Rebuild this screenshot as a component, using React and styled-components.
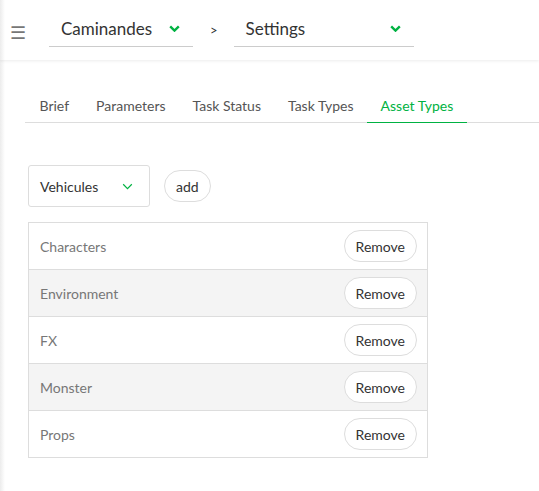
import React from "react";
import styled, { createGlobalStyle } from "styled-components";

const GlobalStyle = createGlobalStyle`
  body {
    margin: 0;
    font-family: Lato, "Open Sans", sans-serif;
    background: #fff;
    color: #333;
  }
`;

const Chevron = ({ size = 11, thin }) => (
  <svg width={size} height={Math.round(size * 0.65)} viewBox="0 0 10 6.5">
    <polyline
      points="1,1.2 5,5.2 9,1.2"
      fill="none"
      stroke="#00b242"
      strokeWidth={thin ? 1.1 : 2.2}
    />
  </svg>
);

const App = () => {
  const types = ["Characters", "Environment", "FX", "Monster", "Props"];
  const tabs = ["Brief", "Parameters", "Task Status", "Task Types", "Asset Types"];
  return (
    <Page>
      <GlobalStyle />
      <Header>
        <Burger>☰</Burger>
        <Combo width="144px">
          <span>Caminandes</span>
          <Chevron />
        </Combo>
        <Sep>&gt;</Sep>
        <Combo width="180px">
          <span>Settings</span>
          <Chevron />
        </Combo>
      </Header>
      <Main>
        <Tabs>
          {tabs.map((t) => (
            <Tab key={t} active={t === "Asset Types"}>
              {t}
            </Tab>
          ))}
        </Tabs>
        <AddRow>
          <Select>
            <span>Vehicules</span>
            <Chevron size={11} thin />
          </Select>
          <Pill>add</Pill>
        </AddRow>
        <Table>
          {types.map((t, i) => (
            <Row key={t} striped={i % 2 === 1}>
              <Name>{t}</Name>
              <Pill>Remove</Pill>
            </Row>
          ))}
        </Table>
      </Main>
    </Page>
  );
};

const Page = styled.div`
  min-height: 491px;
  position: relative;
  &::before {
    content: "";
    position: absolute;
    left: 0;
    top: 0;
    bottom: 0;
    width: 5px;
    background: linear-gradient(to right, #ececec, #fff);
  }
`;

const Header = styled.header`
  height: 60px;
  display: flex;
  align-items: flex-start;
  padding-left: 10px;
  box-shadow: 0 1px 3px rgba(0, 0, 0, 0.08);
  position: relative;
`;

const Burger = styled.span`
  font-size: 18px;
  color: #777;
  width: 39px;
  margin-top: 21px;
`;

const Combo = styled.div`
  width: ${(p) => p.width};
  height: 40px;
  margin-top: 7px;
  box-sizing: border-box;
  border-bottom: 1px solid #ccc;
  display: flex;
  align-items: center;
  justify-content: space-between;
  padding: 3px 13px 0 12px;
  font-size: 17px;
  color: #333;
`;

const Sep = styled.span`
  font-size: 13px;
  margin: 22px 16px 0 17px;
  color: #333;
`;

const Main = styled.main`
  padding: 28px 0 0 25px;
`;

const Tabs = styled.div`
  display: flex;
  border-bottom: 1px solid #ddd;
  padding-left: 1px;
`;

const Tab = styled.div`
  font-size: 14px;
  padding: 9px 13.5px 8px;
  color: ${(p) => (p.active ? "#00b242" : "#555")};
  border-bottom: 1px solid ${(p) => (p.active ? "#00b242" : "transparent")};
  margin-bottom: -1px;
`;

const AddRow = styled.div`
  display: flex;
  align-items: center;
  gap: 14px;
  margin: 42px 0 15px 3px;
`;

const Select = styled.div`
  width: 122px;
  height: 42px;
  box-sizing: border-box;
  border: 1px solid #ddd;
  border-radius: 3px;
  display: flex;
  align-items: center;
  justify-content: space-between;
  padding: 0 16px 0 11px;
  font-size: 14px;
  color: #333;
`;

const Pill = styled.button`
  font-family: inherit;
  font-size: 14px;
  color: #333;
  background: #fff;
  border: 1px solid #ddd;
  border-radius: 16px;
  height: 32px;
  padding: 0 11px;
`;

const Table = styled.div`
  width: 400px;
  box-sizing: border-box;
  margin-left: 3px;
  border: 1px solid #ddd;
`;

const Row = styled.div`
  height: 46px;
  display: flex;
  align-items: center;
  justify-content: space-between;
  padding: 0 10px 0 11px;
  background: ${(p) => (p.striped ? "#f4f4f4" : "#fff")};
  & + & {
    border-top: 1px solid #ddd;
  }
`;

const Name = styled.span`
  font-size: 14px;
  color: #777;
`;

export default App;
